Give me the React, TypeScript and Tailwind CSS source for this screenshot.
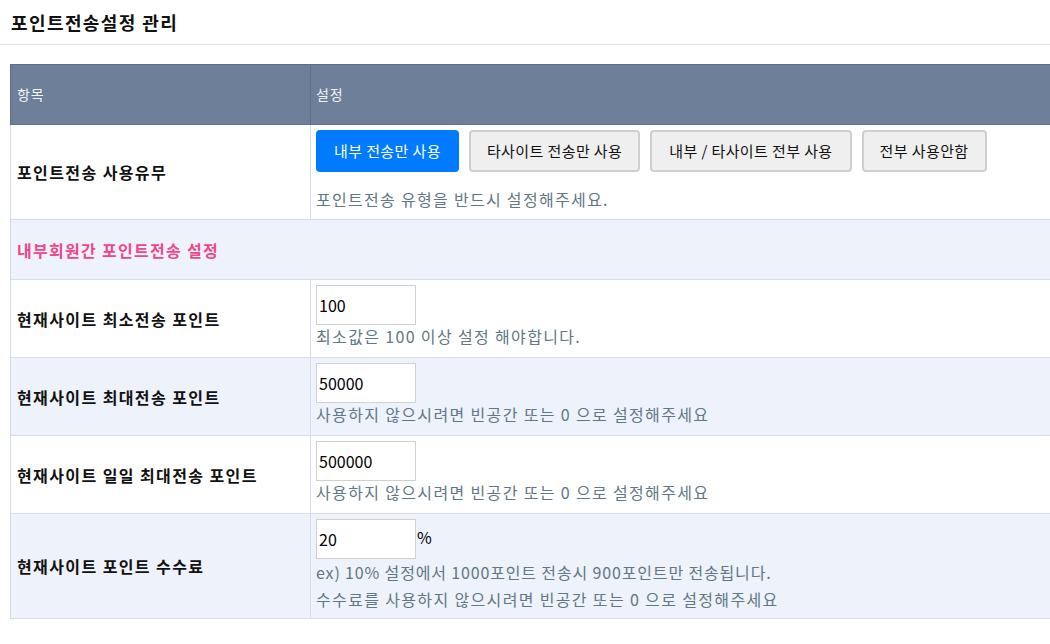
// 포인트전송설정 관리 — settings table

const font = "font-['Malgun_Gothic','Noto_Sans_CJK_KR',sans-serif]";

const rows = [
  {
    label: "현재사이트 최소전송 포인트",
    value: "100",
    help: ["최소값은 100 이상 설정 해야합니다."],
    shaded: false,
  },
  {
    label: "현재사이트 최대전송 포인트",
    value: "50000",
    help: ["사용하지 않으시려면 빈공간 또는 0 으로 설정해주세요"],
    shaded: true,
  },
  {
    label: "현재사이트 일일 최대전송 포인트",
    value: "500000",
    help: ["사용하지 않으시려면 빈공간 또는 0 으로 설정해주세요"],
    shaded: false,
  },
];

function TextInput({ value }: { value: string }) {
  return (
    <input
      type="text"
      defaultValue={value}
      className="w-[100px] h-[40px] border border-[#d0d0d0] bg-white px-[2px] text-[16px] text-black outline-none"
    />
  );
}

export default function App() {
  return (
    <div className={`w-[1050px] h-[644px] overflow-hidden bg-white ${font}`}>
      {/* ── Title ── */}
      <div className="h-[45px] border-b border-[#dddddd] pl-[11px] flex items-center">
        <h1 className="text-[18px] font-bold text-[#111] leading-none tracking-[1.4px]">포인트전송설정 관리</h1>
      </div>

      <div className="pt-[19px] pl-[10px]">
        <table className="w-[1060px] border-collapse table-fixed">
          <colgroup>
            <col className="w-[300px]" />
            <col />
          </colgroup>
          <thead>
            <tr className="h-[60px] bg-[#6e7f99] text-[14px] text-[#f2f4f8] tracking-[0.8px]">
              <th className="border border-[#5f6f89] px-[6px] text-left font-normal">항목</th>
              <th className="border border-[#5f6f89] px-[5px] text-left font-normal">설정</th>
            </tr>
          </thead>
          <tbody>
            {/* 사용유무 */}
            <tr>
              <td className="border border-[#d6dce8] px-[6px] text-[16px] font-bold text-[#111] tracking-[1.4px]">
                포인트전송 사용유무
              </td>
              <td className="border border-[#d6dce8] pl-[5px] pt-[5px] pb-[8px]">
                <div className="flex gap-[10px] tracking-[0.4px]">
                  <button className="h-[42px] px-[18px] rounded-[4px] bg-[#007bff] text-white text-[15px]">
                    내부 전송만 사용
                  </button>
                  <button className="h-[42px] px-[16px] rounded-[4px] bg-[#efefef] border-2 border-[#cfcfcf] text-[#111] text-[15px]">
                    타사이트 전송만 사용
                  </button>
                  <button className="h-[42px] px-[17px] rounded-[4px] bg-[#efefef] border-2 border-[#cfcfcf] text-[#111] text-[15px]">
                    내부 / 타사이트 전부 사용
                  </button>
                  <button className="h-[42px] px-[16px] rounded-[4px] bg-[#efefef] border-2 border-[#cfcfcf] text-[#111] text-[15px]">
                    전부 사용안함
                  </button>
                </div>
                <p className="mt-[15px] text-[16px] leading-[24px] text-[#617786] tracking-[1.3px]">
                  포인트전송 유형을 반드시 설정해주세요.
                </p>
              </td>
            </tr>

            {/* section */}
            <tr className="h-[60px] bg-[#eef2fa]">
              <td colSpan={2} className="border border-[#d6dce8] px-[6px] text-[16px] font-bold text-[#f0468b] tracking-[1.3px]">
                내부회원간 포인트전송 설정
              </td>
            </tr>

            {rows.map((r) => (
              <tr key={r.label} className={r.shaded ? "bg-[#eef2fa]" : "bg-white"}>
                <td className="border border-[#d6dce8] px-[6px] text-[16px] font-bold text-[#111] tracking-[1.4px]">{r.label}</td>
                <td className="border border-[#d6dce8] pl-[5px] pt-[5px] pb-[10px]">
                  <TextInput value={r.value} />
                  {r.help.map((h) => (
                    <p key={h} className="text-[16px] leading-[22px] text-[#617786] tracking-[1.35px]">
                      {h}
                    </p>
                  ))}
                </td>
              </tr>
            ))}

            {/* 수수료 */}
            <tr className="bg-[#eef2fa]">
              <td className="border border-[#d6dce8] px-[6px] text-[16px] font-bold text-[#111] tracking-[1.4px]">
                현재사이트 포인트 수수료
              </td>
              <td className="border border-[#d6dce8] pl-[5px] pt-[5px] pb-[5px]">
                <div className="flex items-start">
                  <TextInput value="20" />
                  <span className="ml-[1px] mt-[8px] text-[16px] text-black leading-[20px]">%</span>
                </div>
                <p className="text-[16px] leading-[27px] text-[#617786] tracking-[0.85px]">
                  ex) 10% 설정에서 1000포인트 전송시 900포인트만 전송됩니다.
                </p>
                <p className="text-[16px] leading-[27px] text-[#617786] tracking-[1.35px]">
                  수수료를 사용하지 않으시려면 빈공간 또는 0 으로 설정해주세요
                </p>
              </td>
            </tr>
          </tbody>
        </table>
      </div>
    </div>
  );
}
